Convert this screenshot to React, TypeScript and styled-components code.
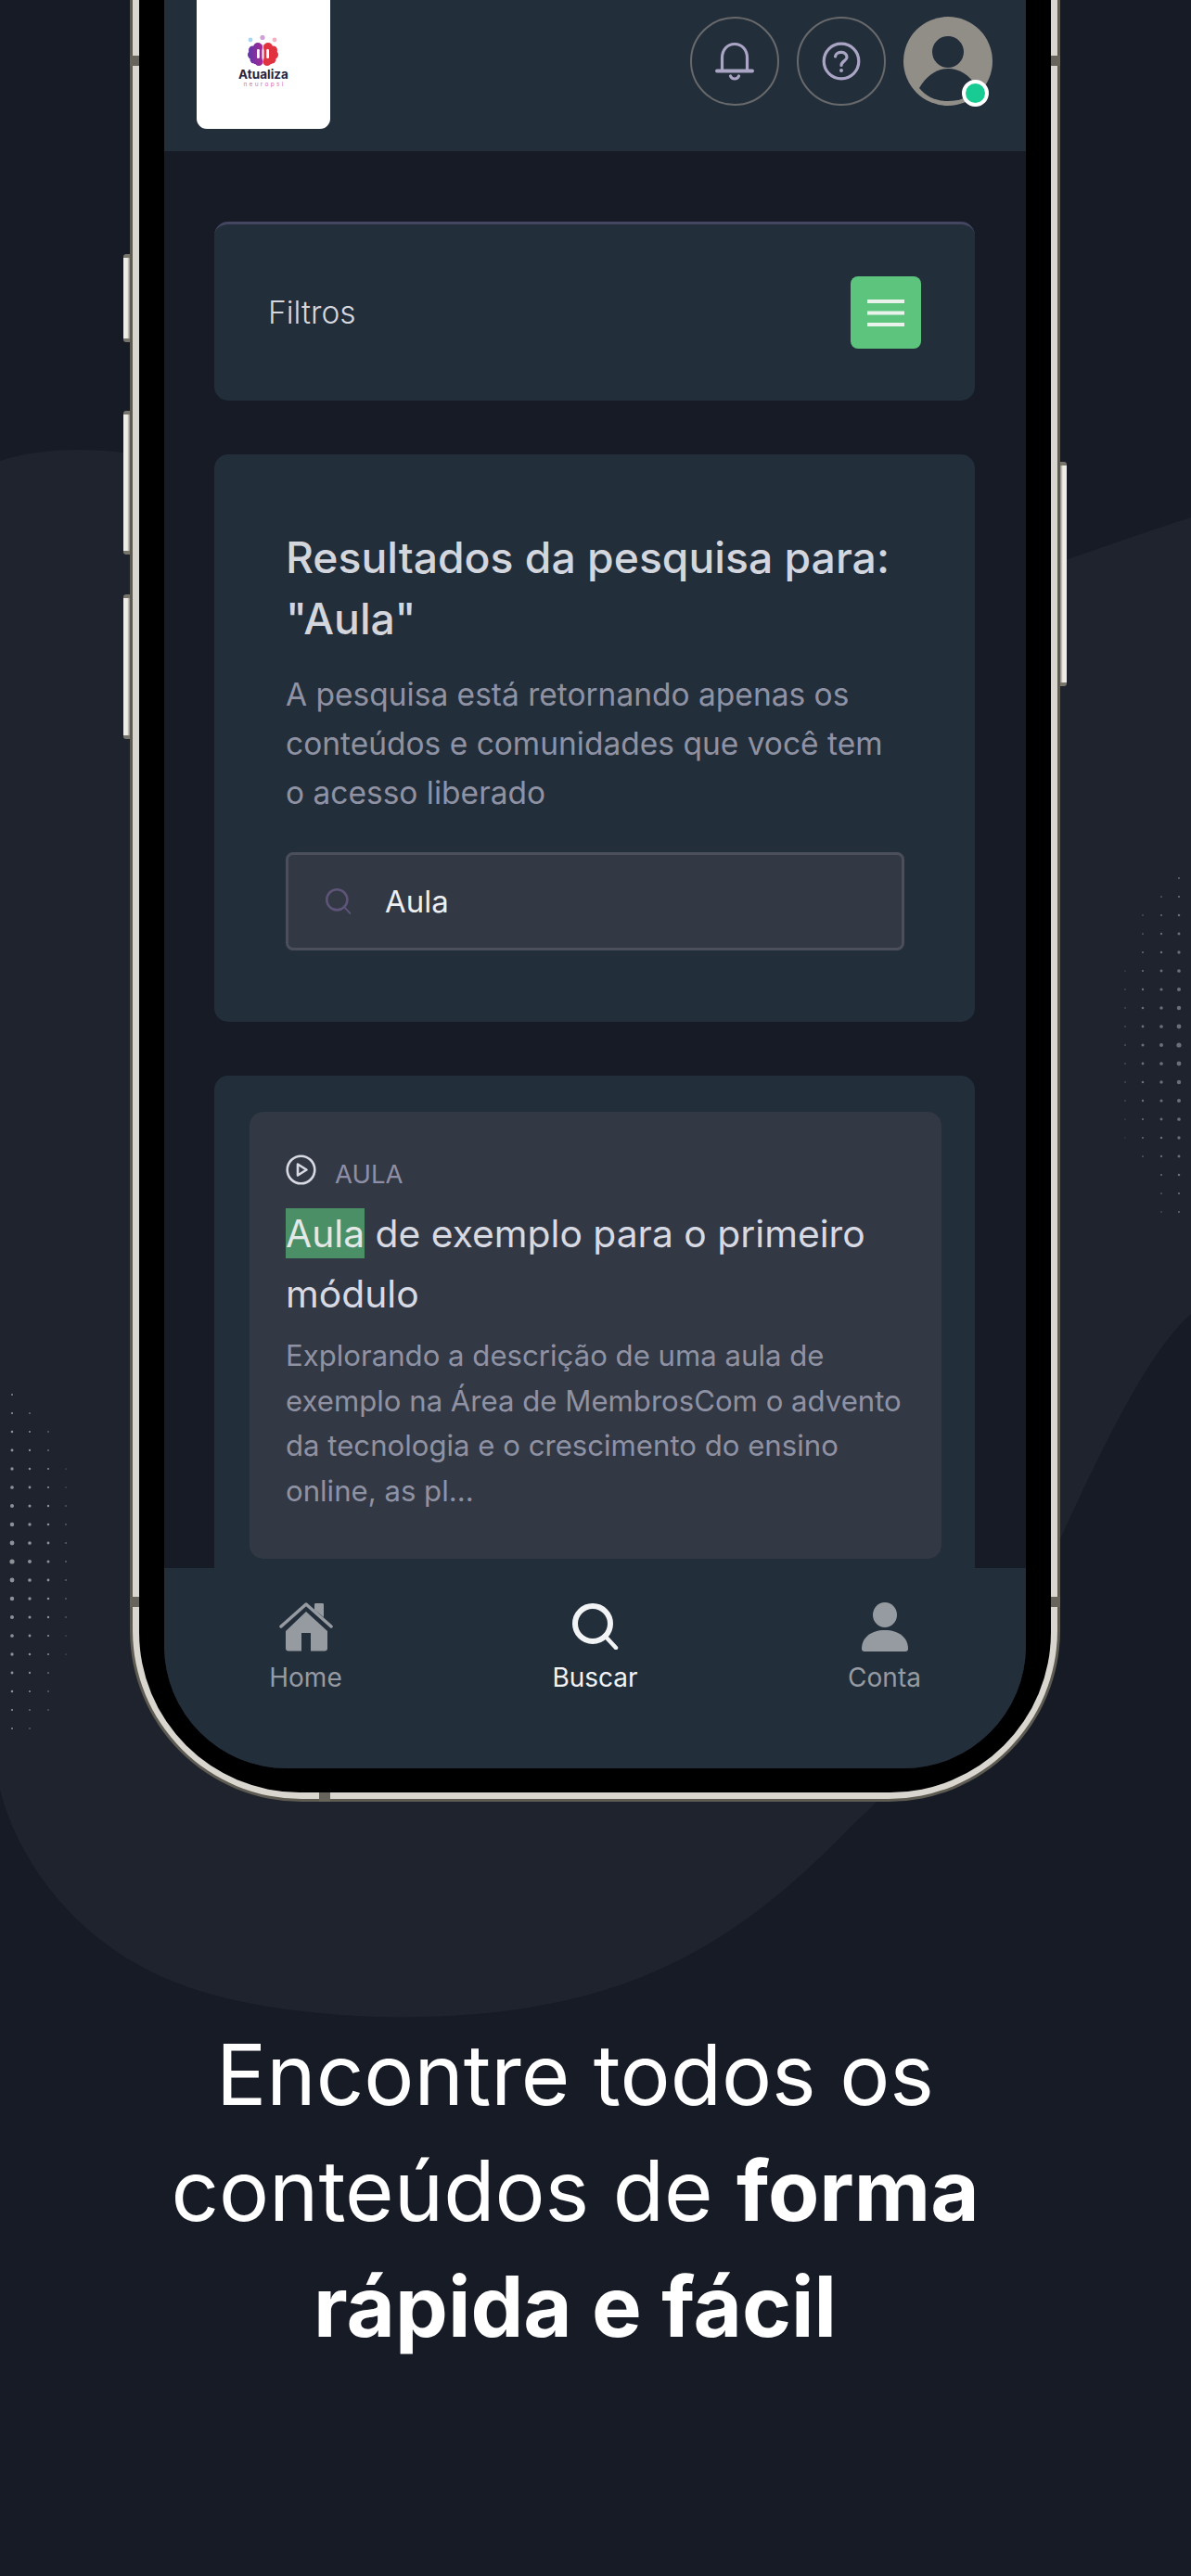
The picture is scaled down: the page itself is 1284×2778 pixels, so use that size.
import React from "react";
import styled, { createGlobalStyle } from "styled-components";

const Global = createGlobalStyle`
  html, body { margin: 0; padding: 0; background: #161b26; }
  body { font-family: Inter, "Liberation Sans", sans-serif; width: 1284px; height: 2778px; overflow: hidden; }
  * { box-sizing: border-box; }
`;

const Page = styled.div`
  position: relative;
  width: 1284px;
  height: 2778px;
  background: #161b26;
  overflow: hidden;
`;
const Backdrop = styled.svg`
  position: absolute;
  inset: 0;
`;
const Phone = styled.div`
  position: relative;
  width: 1003px;
  height: 1943px;
  margin-left: 140px;
  padding: 0 7px 7px;
  background: #d9d6cf;
  border: 3px solid #5e5b53;
  border-top: 0;
  border-radius: 0 0 185px 185px;
`;
const Bezel = styled.div`
  height: 100%;
  padding: 0 27px 26px;
  background: #000;
  border-radius: 0 0 173px 173px;
`;
const Screen = styled.div`
  height: 100%;
  display: flex;
  flex-direction: column;
  background: #161b26;
  border-radius: 0 0 132px 132px;
  overflow: hidden;
`;
const SideButton = styled.span<{ $top: number; $h: number; $right?: boolean }>`
  position: absolute;
  top: ${(p) => p.$top}px;
  height: ${(p) => p.$h}px;
  width: 7px;
  ${(p) => (p.$right ? "right: -10px;" : "left: -10px;")}
  background: linear-gradient(${(p) => (p.$right ? "270deg" : "90deg")}, #efece6 60%, #8b8880);
  border-radius: ${(p) => (p.$right ? "0 3px 3px 0" : "3px 0 0 3px")};
  border-top: 4px solid #77746c;
  border-bottom: 4px solid #77746c;
`;
const Band = styled.span<{ $top: number; $right?: boolean }>`
  position: absolute;
  top: ${(p) => p.$top}px;
  ${(p) => (p.$right ? "right: -3px;" : "left: -3px;")}
  width: 10px;
  height: 11px;
  background: #67645c;
`;
const BottomBand = styled.span`
  position: absolute;
  left: 201px;
  bottom: -3px;
  width: 12px;
  height: 10px;
  background: #67645c;
`;
const Header = styled.header`
  flex: none;
  height: 163px;
  display: flex;
  align-items: flex-start;
  justify-content: space-between;
  padding: 0 36px 0 35px;
  background: #232e3b;
`;
const LogoCard = styled.div`
  width: 144px;
  height: 139px;
  display: flex;
  flex-direction: column;
  align-items: center;
  padding-top: 38px;
  background: #fff;
  border-radius: 0 0 11px 11px;
`;
const LogoName = styled.div`
  font-size: 13.5px;
  line-height: 15px;
  font-weight: 700;
  color: #23243f;
`;
const LogoSub = styled.div`
  font-size: 6.5px;
  line-height: 7px;
  letter-spacing: 2.3px;
  margin-left: 2px;
  color: #cc70b4;
`;
const Actions = styled.div`
  display: flex;
  gap: 19px;
  padding-top: 18px;
`;
const RoundButton = styled.button`
  width: 96px;
  height: 96px;
  padding: 0;
  display: flex;
  align-items: center;
  justify-content: center;
  background: transparent;
  border: 2.5px solid #68696b;
  border-radius: 50%;
`;
const Avatar = styled.div`
  position: relative;
  width: 96px;
  height: 96px;
`;
const OnlineDot = styled.span`
  position: absolute;
  left: 63px;
  top: 68px;
  width: 29px;
  height: 29px;
  background: #17cb93;
  border: 4px solid #fff;
  border-radius: 50%;
`;
const Main = styled.main`
  flex: 1;
  min-height: 0;
  overflow: hidden;
  display: flex;
  flex-direction: column;
  gap: 58px;
  padding: 76px 55px 0 54px;
`;
const FilterCard = styled.section`
  flex: none;
  height: 193px;
  display: flex;
  align-items: center;
  justify-content: space-between;
  padding: 0 58px;
  background: #232e3b;
  border-top: 3px solid #454662;
  border-radius: 15px;
`;
const FilterLabel = styled.span`
  font-size: 33.5px;
  font-weight: 300;
  color: #d6d8de;
`;
const MenuButton = styled.button`
  width: 76px;
  height: 78px;
  padding: 0;
  display: flex;
  align-items: center;
  justify-content: center;
  background: #5cc47d;
  border: 0;
  border-radius: 8px;
`;
const SearchCard = styled.section`
  flex: none;
  height: 612px;
  padding: 78px 76px 0 77px;
  background: #232e3b;
  border-radius: 15px;
`;
const SearchTitle = styled.h1`
  margin: 0;
  font-size: 46.3px;
  line-height: 66px;
  font-weight: 500;
  color: #d4d6de;
`;
const SearchHint = styled.p`
  margin: 23px 0 0;
  font-size: 33.5px;
  line-height: 53px;
  font-weight: 400;
  color: #8f92a3;
`;
const SearchField = styled.div`
  height: 106px;
  margin-top: 37px;
  display: flex;
  align-items: center;
  gap: 36px;
  padding-left: 40px;
  background: #333845;
  border: 3px solid #4b4f5c;
  border-radius: 8px;
`;
const SearchValue = styled.span`
  font-size: 33px;
  color: #eceef1;
`;
const ResultsCard = styled.section`
  flex: none;
  padding: 39px 36px 60px 38px;
  background: #232e3b;
  border-radius: 15px 15px 0 0;
`;
const ResultItem = styled.article`
  height: 482px;
  padding: 44px 39px 0;
  background: #333845;
  border-radius: 15px;
`;
const ResultMeta = styled.div`
  display: flex;
  align-items: center;
  gap: 20px;
  height: 36px;
`;
const ResultType = styled.span`
  font-size: 27.5px;
  color: #8e8fa5;
  padding-top: 10px;
`;
const ResultTitle = styled.h2`
  margin: 19px 0 0;
  font-size: 40.8px;
  line-height: 65px;
  font-weight: 400;
  color: #d8dae3;
`;
const Highlight = styled.mark`
  padding: 2px 0;
  background: #4a8f66;
  color: #e4e8e6;
`;
const ResultText = styled.p`
  margin: 10px 0 0;
  font-size: 31.15px;
  line-height: 48.5px;
  color: #8f92a3;
`;
const BottomNav = styled.nav`
  flex: none;
  height: 216px;
  display: grid;
  grid-template-columns: repeat(3, 312px);
  justify-content: center;
  background: #232e3b;
`;
const NavItem = styled.div<{ $active?: boolean }>`
  display: flex;
  flex-direction: column;
  align-items: center;
  padding-top: 36px;
  color: ${(p) => (p.$active ? "#f2f3f5" : "#969ba2")};
`;
const NavIcon = styled.div`
  height: 54px;
  display: flex;
  align-items: center;
  justify-content: center;
`;
const NavLabel = styled.span`
  margin-top: 11px;
  font-size: 28px;
  line-height: 34px;
`;
const Caption = styled.h2`
  position: relative;
  width: 1000px;
  margin: 232px 0 0 120px;
  text-align: center;
  font-size: 90.3px;
  line-height: 125px;
  font-weight: 400;
  color: #fff;
  strong { font-weight: 700; }
`;

type DotSpec = { x: number; first: number; last: number; max: number };

function dots(specs: DotSpec[], y0: number, fill: string) {
  const out: React.ReactElement[] = [];
  specs.forEach((s, c) => {
    for (let i = s.first; i <= s.last; i++) {
      const falloff = 1 - (Math.abs(i - 9) / 9) * 0.65;
      out.push(<circle key={`${c}-${i}`} cx={s.x} cy={y0 + i * 20} r={s.max * falloff} fill={fill} />);
    }
  });
  return out;
}

const Background = () => (
  <Backdrop width="1284" height="2778" viewBox="0 0 1284 2778">
    <path
      d="M0 497C40 484 90 482 140 489L1143 606C1190 590 1240 572 1284 558L1284 1417C1240 1455 1190 1555 1133 1682C1060 1810 990 1905 921 1966C860 2030 790 2090 708 2125C620 2165 510 2178 407 2175C280 2170 180 2150 106 2090C55 2050 15 1990 0 1930Z"
      fill="#1f232e"
    />
    {dots(
      [
        { x: 13, first: 0, last: 18, max: 2.6 },
        { x: 32, first: 1, last: 18, max: 2 },
        { x: 52, first: 2, last: 17, max: 1.5 },
        { x: 71, first: 4, last: 14, max: 0.8 },
      ],
      1504,
      "#8f9199",
    )}
    {dots(
      [
        { x: 1271, first: 0, last: 18, max: 2.6 },
        { x: 1252, first: 1, last: 18, max: 2 },
        { x: 1232, first: 2, last: 15, max: 1.5 },
        { x: 1213, first: 5, last: 14, max: 0.8 },
      ],
      947,
      "#6d6f78",
    )}
  </Backdrop>
);

const BrainLogo = () => (
  <svg width="40" height="34.500" viewBox="0 0 40 34.500">
    <defs>
      <linearGradient id="brainLeft" gradientUnits="userSpaceOnUse" x1="3" y1="0" x2="19" y2="0">
        <stop offset="0" stopColor="#5b35a8" />
        <stop offset="1" stopColor="#a52a96" />
      </linearGradient>
    </defs>
    <circle cx="6" cy="5" r="2.400" fill="#a8d6f5" />
    <circle cx="19" cy="2.500" r="2.600" fill="#d0a0d8" />
    <circle cx="32" cy="5" r="2.400" fill="#f5b0c4" />
    <g fill="url(#brainLeft)">
      <circle cx="14" cy="13" r="5" />
      <circle cx="8.500" cy="16" r="4.500" />
      <circle cx="7.500" cy="21" r="4.500" />
      <circle cx="10" cy="26" r="4.500" />
      <circle cx="15" cy="28.500" r="4.500" />
      <rect x="10" y="10" width="8.500" height="21" />
    </g>
    <g fill="#e0323f">
      <circle cx="25" cy="13" r="5" />
      <circle cx="30.500" cy="16" r="4.500" />
      <circle cx="31.500" cy="21" r="4.500" />
      <circle cx="29" cy="26" r="4.500" />
      <circle cx="24" cy="28.500" r="4.500" />
      <rect x="20.500" y="10" width="8.500" height="21" />
    </g>
    <rect x="13" y="15" width="2.800" height="10" rx="1.200" fill="#fff" />
    <rect x="23.200" y="15" width="2.800" height="10" rx="1.200" fill="#fff" />
  </svg>
);

const BellIcon = () => (
  <svg width="42" height="42" viewBox="0 0 42 42" fill="none" stroke="#aaa5c4" strokeLinecap="round">
    <path d="M7.500 31V17.500C7.500 9 13 2.500 21 2.500S34.500 9 34.500 17.500V31" strokeWidth="3.200" />
    <path d="M2 31.500H40" strokeWidth="4" />
    <path d="M16.500 37C18 41 24 41 25.500 37" strokeWidth="3.200" />
  </svg>
);

const HelpIcon = () => (
  <svg width="42" height="42" viewBox="0 0 42 42" fill="none" stroke="#aaa5c4" strokeLinecap="round">
    <circle cx="21" cy="21" r="18.800" strokeWidth="3.200" />
    <path d="M14.500 16C15.500 9.500 27.500 10 27 17C26.800 20.500 21 21 21 25.500" strokeWidth="3.200" />
    <circle cx="21" cy="31" r="2" fill="#aaa5c4" stroke="none" />
  </svg>
);

const AvatarArt = () => (
  <svg width="96" height="96" viewBox="0 0 96 96">
    <circle cx="48" cy="48" r="48" fill="#918e88" />
    <circle cx="48" cy="38" r="17" fill="#232e3b" />
    <path d="M17 77C26 62 37 56 48 56C60 56 71 62 80 77C72 87 60 91 48 91C36 91 25 87 17 77Z" fill="#232e3b" />
  </svg>
);

const MenuIcon = () => (
  <svg width="40" height="30" viewBox="0 0 40 30" stroke="#e9f3ec" strokeWidth="4">
    <path d="M0 3H40M0 15.500H40M0 28H40" />
  </svg>
);

const SearchGlyph = ({ size, color, width }: { size: number; color: string; width: number }) => (
  <svg width={size} height={size} viewBox="0 0 50 50" fill="none" stroke={color} strokeLinecap="round">
    <circle cx="22" cy="22" r={22 - width / 2} strokeWidth={width} />
    <path d="M35 35L47 48" strokeWidth={width * 0.75} />
  </svg>
);

const PlayIcon = () => (
  <svg width="33" height="33" viewBox="0 0 33 33" fill="none" stroke="#d8dae3" strokeWidth="2.600" strokeLinejoin="round">
    <circle cx="16.500" cy="16.500" r="14.800" />
    <path d="M13 10.500L22.500 16.500L13 22.500Z" />
  </svg>
);

const HomeIcon = () => (
  <svg width="58" height="53" viewBox="0 0 58 53" fill="currentColor">
    <path d="M38 2.500C38 1.500 38.500 1 39.500 1H46.500C47.500 1 48 1.500 48 2.500V16L38 8Z" />
    <path d="M2 26L29 2L56 26" fill="none" stroke="currentColor" strokeWidth="3.500" strokeLinecap="round" strokeLinejoin="round" />
    <path d="M29 10L52 31V49.500C52 51.500 51 52.500 49 52.500H34V33H24V52.500H10C8 52.500 7 51.500 7 49.500V31Z" />
  </svg>
);

const PersonIcon = () => (
  <svg width="50" height="53" viewBox="0 0 50 53" fill="currentColor">
    <ellipse cx="25" cy="13.500" rx="13" ry="13.500" />
    <path d="M0 50C0 38 10 30 25 30S50 38 50 50C50 52 49 53 47 53H3C1 53 0 52 0 50Z" />
  </svg>
);

export default function App() {
  return (
    <Page>
      <Global />
      <Background />
      <Phone>
        <SideButton $top={274} $h={95} />
        <SideButton $top={443} $h={155} />
        <SideButton $top={641} $h={156} />
        <SideButton $right $top={498} $h={242} />
        <Band $top={60} />
        <Band $right $top={60} />
        <Band $top={1722} />
        <Band $right $top={1722} />
        <BottomBand />
        <Bezel>
          <Screen>
            <Header>
              <LogoCard>
                <BrainLogo />
                <LogoName>Atualiza</LogoName>
                <LogoSub>neuropsi</LogoSub>
              </LogoCard>
              <Actions>
                <RoundButton aria-label="Notificações">
                  <BellIcon />
                </RoundButton>
                <RoundButton aria-label="Ajuda">
                  <HelpIcon />
                </RoundButton>
                <Avatar>
                  <AvatarArt />
                  <OnlineDot />
                </Avatar>
              </Actions>
            </Header>
            <Main>
              <FilterCard>
                <FilterLabel>Filtros</FilterLabel>
                <MenuButton aria-label="Abrir filtros">
                  <MenuIcon />
                </MenuButton>
              </FilterCard>
              <SearchCard>
                <SearchTitle>
                  Resultados da pesquisa para:
                  <br />
                  "Aula"
                </SearchTitle>
                <SearchHint>
                  A pesquisa está retornando apenas os conteúdos e comunidades que você tem o acesso liberado
                </SearchHint>
                <SearchField>
                  <SearchGlyph size={28} color="#5e5478" width={4.500} />
                  <SearchValue>Aula</SearchValue>
                </SearchField>
              </SearchCard>
              <ResultsCard>
                <ResultItem>
                  <ResultMeta>
                    <PlayIcon />
                    <ResultType>AULA</ResultType>
                  </ResultMeta>
                  <ResultTitle>
                    <Highlight>Aula</Highlight> de exemplo para o primeiro módulo
                  </ResultTitle>
                  <ResultText>
                    Explorando a descrição de uma aula de exemplo na Área de MembrosCom o advento da tecnologia e o
                    crescimento do ensino online, as pl...
                  </ResultText>
                </ResultItem>
              </ResultsCard>
            </Main>
            <BottomNav>
              <NavItem>
                <NavIcon>
                  <HomeIcon />
                </NavIcon>
                <NavLabel>Home</NavLabel>
              </NavItem>
              <NavItem $active>
                <NavIcon>
                  <SearchGlyph size={50} color="currentColor" width={6} />
                </NavIcon>
                <NavLabel>Buscar</NavLabel>
              </NavItem>
              <NavItem>
                <NavIcon>
                  <PersonIcon />
                </NavIcon>
                <NavLabel>Conta</NavLabel>
              </NavItem>
            </BottomNav>
          </Screen>
        </Bezel>
      </Phone>
      <Caption>
        Encontre todos os
        <br />
        conteúdos de <strong>forma</strong>
        <br />
        <strong>rápida e fácil</strong>
      </Caption>
    </Page>
  );
}
